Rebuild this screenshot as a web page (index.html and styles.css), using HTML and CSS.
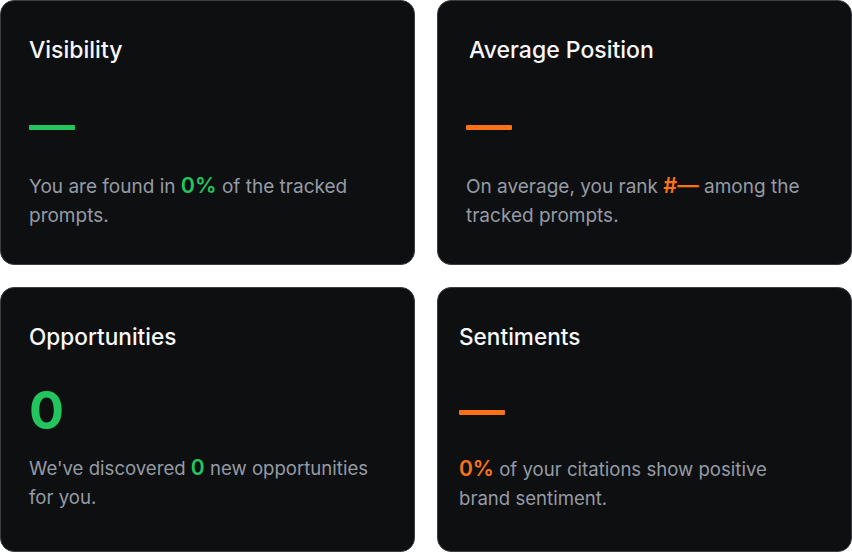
FILE: index.html
```html
<!DOCTYPE html>
<html lang="en">
<head>
<meta charset="utf-8">
<title>Stats</title>
<link rel="stylesheet" href="styles.css">
</head>
<body>
<main class="grid">
  <section class="card card-a">
    <h2 class="title">Visibility</h2>
    <div class="dash dash-green"></div>
    <p class="desc">You are found in <span class="hl hl-green">0%</span> of the tracked prompts.</p>
  </section>
  <section class="card card-b">
    <h2 class="title title-shift">Average Position</h2>
    <div class="dash dash-orange"></div>
    <p class="desc">On average, you rank <span class="hl hl-orange">#—</span> among the tracked prompts.</p>
  </section>
  <section class="card card-c">
    <h2 class="title">Opportunities</h2>
    <div class="big">0</div>
    <p class="desc">We've discovered <span class="hl hl-green">0</span> new opportunities for you.</p>
  </section>
  <section class="card card-d">
    <h2 class="title">Sentiments</h2>
    <div class="dash dash-orange"></div>
    <p class="desc"><span class="hl hl-orange">0%</span> of your citations show positive brand sentiment.</p>
  </section>
</main>
</body>
</html>
```
FILE: styles.css
```css
html, body {
  margin: 0;
  padding: 0;
  background: #ffffff;
}
body {
  font-family: Inter, "Noto Sans", sans-serif;
  width: 852px;
  height: 552px;
  overflow: hidden;
}
.grid {
  display: grid;
  grid-template-columns: 415px 415px;
  grid-template-rows: 265px 265px;
  column-gap: 22px;
  row-gap: 22px;
}
.card {
  box-sizing: border-box;
  background: #0e0f11;
  border: 1.5px solid #3c3e44;
  border-radius: 14px;
  display: flex;
  flex-direction: column;
  padding: 35px 28px 0 28px;
}
.card-d {
  padding-left: 21px;
}
.title {
  margin: 0;
  font-size: 23px;
  line-height: 28px;
  font-weight: 500;
  color: #f7f7f8;
  letter-spacing: 0;
}
.card-c .title, .card-d .title {
  font-size: 22.6px;
}
.title-shift {
  padding-left: 3px;
}
.dash {
  width: 46px;
  height: 5px;
  border-radius: 1px;
}
.card-a .dash, .card-b .dash {
  margin-top: 61px;
}
.card-d .dash {
  margin-top: 59px;
}
.dash-green { background: #22c55e; }
.dash-orange { background: #f97316; }
.desc {
  margin: 0;
  font-size: 19px;
  line-height: 29px;
  color: #959ba5;
  max-width: 355px;
}
.card-c .desc, .card-d .desc {
  font-size: 18.6px;
}
.card-a .desc, .card-b .desc {
  margin-top: 42px;
}
.card-d .desc {
  margin-top: 40px;
}
.card-b .desc { max-width: 350px; }
.card-c .desc { max-width: 360px; }
.card-d .desc { max-width: 320px; }
.hl {
  font-size: 21.5px;
  line-height: 20px;
  font-weight: 600;
}
.card-c .hl, .card-d .hl {
  font-size: 21px;
}
.hl-green { color: #22c55e; }
.hl-orange { color: #f97316; }
.big {
  margin-top: 34px;
  font-size: 52px;
  line-height: 52px;
  font-weight: 700;
  color: #22c55e;
}
.card-c .desc {
  margin-top: 17px;
}
```
